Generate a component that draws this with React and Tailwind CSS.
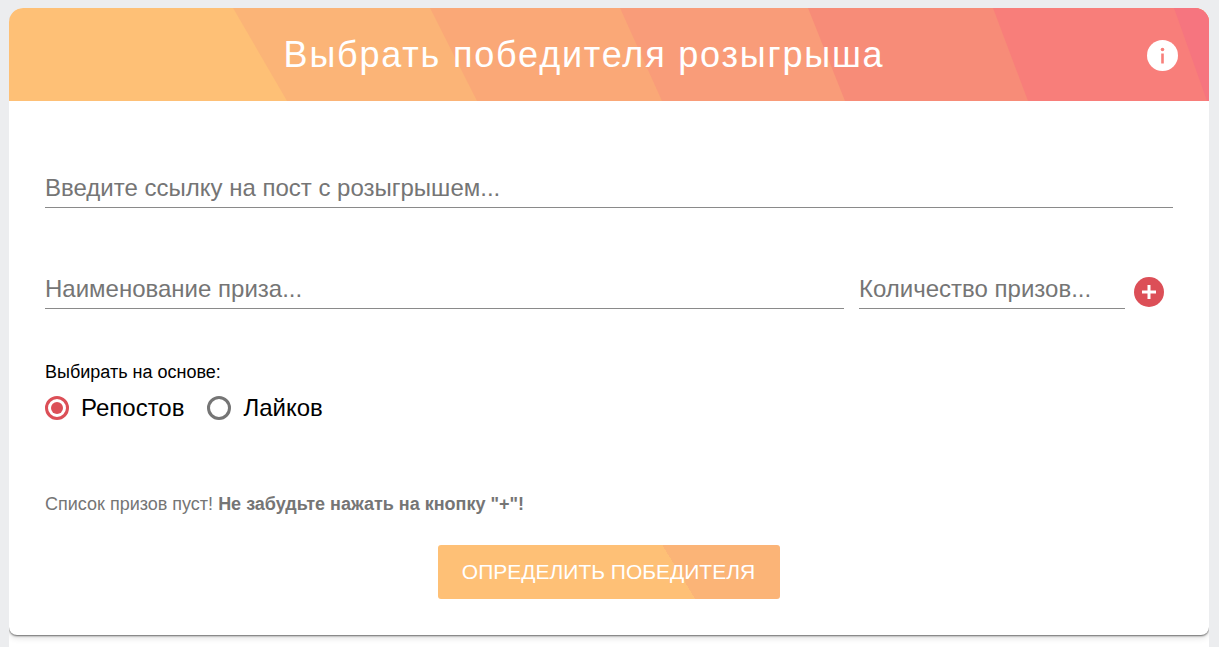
import React from 'react'

const headerBands = [
  { fill: '#fbb477', points: '224,0 1200,0 1200,93 278,93' },
  { fill: '#faa877', points: '421,0 1200,0 1200,93 468,93' },
  { fill: '#f99c79', points: '611,0 1200,0 1200,93 653,93' },
  { fill: '#f78c78', points: '799,0 1200,0 1200,93 836,93' },
  { fill: '#f87e7a', points: '984,0 1200,0 1200,93 1019,93' },
  { fill: '#f6757f', points: '1165,0 1200,0 1200,93 1198,93' },
]

const App = () => {
  return (
    <div className="bg-[#ecedef] h-[647px] overflow-hidden pl-[9px] pr-[10px] pt-2 font-['Liberation_Sans',sans-serif]">
      <div className="bg-white rounded-t-[14px] h-full overflow-hidden">
        <div className="bg-white rounded-[8px] rounded-t-[14px] h-[627px] flex flex-col shadow-[0_1px_2px_rgba(0,0,0,0.55),0_3px_6px_rgba(0,0,0,0.12)]">
          {/* Header */}
          <div className="relative h-[93px] shrink-0 rounded-t-[14px] overflow-hidden bg-[#fec076] flex items-center justify-center">
            <svg className="absolute inset-0" width="1200" height="93" viewBox="0 0 1200 93">
              {headerBands.map(band => (
                <polygon key={band.points} fill={band.fill} points={band.points} />
              ))}
            </svg>
            <h1 className="relative text-white text-[36px] leading-none tracking-[1.8px] mt-[1px] mr-[50px]">Выбрать победителя розыгрыша</h1>
            <svg className="absolute right-[31px] top-[32px]" width="31" height="31" viewBox="0 0 31 31">
              <circle cx="15.5" cy="15.5" r="15.5" fill="#fff" />
              <circle cx="15.5" cy="9.5" r="1.8" fill="#f87f7a" />
              <rect x="14.2" y="13.5" width="2.6" height="10" fill="#f87f7a" />
            </svg>
          </div>

          {/* Form */}
          <div className="flex-1 flex flex-col px-9">
            <input
              type="text"
              placeholder="Введите ссылку на пост с розыгрышем..."
              className="mt-[65px] h-[42px] pt-[3px] w-[1128px] border-b border-[#8a8a8a] text-[24px] placeholder:text-[#757575] outline-none"
            />

            <div className="flex items-center mt-[59px]">
              <input
                type="text"
                placeholder="Наименование приза..."
                className="h-[42px] pt-[3px] w-[799px] border-b border-[#8a8a8a] text-[24px] placeholder:text-[#757575] outline-none"
              />
              <input
                type="text"
                placeholder="Количество призов..."
                className="ml-[15px] h-[42px] pt-[3px] w-[266px] border-b border-[#8a8a8a] text-[24px] placeholder:text-[#757575] outline-none"
              />
              <button className="ml-[9px] mt-[7px] w-[30px] h-[30px] rounded-full bg-[#dc4f57] flex items-center justify-center">
                <svg width="16" height="16" viewBox="0 0 16 16">
                  <path d="M8 1v14M1 8h14" stroke="#fff" strokeWidth="3" />
                </svg>
              </button>
            </div>

            <div className="mt-[53px] text-[18px] leading-[20px] text-black">Выбирать на основе:</div>

            <div className="flex items-center mt-[12px] text-[24px] leading-[28px] text-black">
              <span className="w-6 h-6 rounded-full border-[3px] border-[#dc4f57] flex items-center justify-center">
                <span className="w-3 h-3 rounded-full bg-[#dc4f57]" />
              </span>
              <span className="ml-3">Репостов</span>
              <span className="ml-[23px] w-6 h-6 rounded-full border-[3px] border-[#757575]" />
              <span className="ml-3">Лайков</span>
            </div>

            <p className="mt-[70px] text-[18px] leading-[24px] text-[#757575]">
              Список призов пуст! <b className="font-bold">Не забудьте нажать на кнопку "+"!</b>
            </p>

            <div className="flex justify-center mt-[29px] mr-[1px]">
              <button
                className="w-[342px] h-[54px] rounded-[3px] text-white text-[21px] bg-[linear-gradient(58.6deg,#fec076_0,#fec076_68.6%,#fbb477_68.6%,#fbb477_100%)]"
              >
                ОПРЕДЕЛИТЬ ПОБЕДИТЕЛЯ
              </button>
            </div>
          </div>
        </div>
      </div>
    </div>
  )
}

export default App
